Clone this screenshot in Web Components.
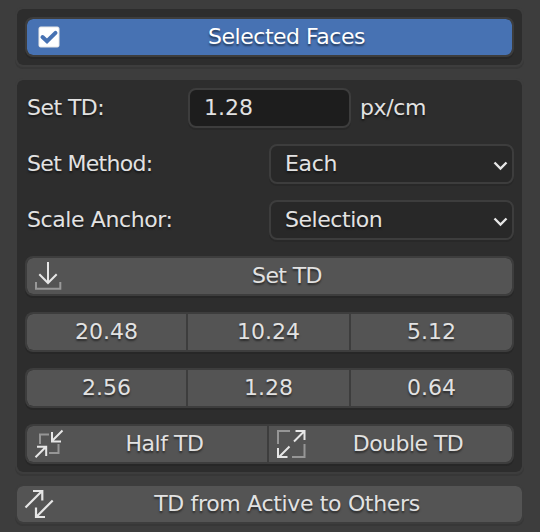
<!DOCTYPE html>
<html lang="en"><head><meta charset="utf-8"><title>Texel Density</title>
<style>
html,body{margin:0;height:100%;background:#3d3d3d;overflow:hidden}
body{font:22px/40px "DejaVu Sans",sans-serif;color:#e2e2e2;text-shadow:0 2px 2px rgba(0,0,0,.5)}
</style></head><body>
<td-sidebar>
 <td-panel class="top"><td-button class="on" icon="check" style="--pad:34px;--ls:-.48px">Selected Faces</td-button></td-panel>
 <td-panel class="main">
  <td-row style="--cols:153px 163px 1fr;--gap:10px"><td-label style="--ls:-.55px">Set TD:</td-label><td-field>1.28</td-field><td-label class="unit">px/cm</td-label></td-row>
  <td-row style="--cols:1fr 245px"><td-label style="--ls:-.68px">Set Method:</td-label><td-select>Each</td-select></td-row>
  <td-row style="--cols:1fr 245px"><td-label>Scale Anchor:</td-label><td-select style="--ls:-.45px">Selection</td-select></td-row>
  <td-button icon="down" style="--pad:35px;--ls:-.6px">Set TD</td-button>
  <td-row style="--cols:161px 163px 165px"><td-button class="first">20.48</td-button><td-button class="mid">10.24</td-button><td-button class="last">5.12</td-button></td-row>
  <td-row style="--cols:161px 163px 165px"><td-button class="first">2.56</td-button><td-button class="mid">1.28</td-button><td-button class="last">0.64</td-button></td-row>
  <td-row style="--cols:242px 247px"><td-button class="first" icon="in" style="--pad:35px;--ls:-.45px">Half TD</td-button><td-button class="last" icon="out" style="--pad:35px;--ls:-.55px">Double TD</td-button></td-row>
 </td-panel>
 <td-button class="wide" icon="swap" style="--pad:35px;--ls:-.33px">TD from Active to Others</td-button>
</td-sidebar>
<script>
const icons={
check:'<rect x="12" y="8" width="20" height="20" rx="1.5" fill="#fff"/><path d="M15.500 18 20 22.200 28.500 13.800" stroke="#4772b3" stroke-width="4" stroke-linecap="round"/>',
down:'<path d="M9 24v6.700h24.300V24" stroke="#999" stroke-width="2"/><path d="M21 4v21M12.300 16.300 21 25 29.700 16.300" stroke-width="2"/>',
in:'<path d="M13 18V8.500h9M31.500 18v9H22" stroke="#969696" stroke-width="2"/><path d="M35.500 4.500 25 15M25 6v9.500h9M8.500 31.300 19 20.800M10 20.800h9.200V30" stroke-width="2"/>',
out:'<path d="M9 18V5h12M23 31h12.500V18" stroke="#969696" stroke-width="2"/><path d="M25 15.500 35.500 5M26.500 5h9v9M20.500 20.500 10 31M9 22v9h9.500" stroke-width="2"/>',
swap:'<path d="M8.500 21.500 25 5M16 5h9.300v9.500M35.700 14.500 19.500 30.700M19 21.500V31h9" stroke-width="2.200"/>'
};
function define(name,css,html='<slot></slot>'){
 customElements.define(name,class extends HTMLElement{
  constructor(){super();this.attachShadow({mode:'open'}).innerHTML='<style>*{box-sizing:border-box}'+css+'</style>'+html;}
  connectedCallback(){const s=this.shadowRoot.querySelector('svg');if(s&&this.hasAttribute('icon'))s.innerHTML=icons[this.getAttribute('icon')];}
 });
}
define('td-sidebar',':host{display:flex;flex-direction:column;padding:7px 16px 0 15px;box-sizing:border-box}');
define('td-panel',':host{display:grid;box-sizing:border-box;gap:16px;background:#2d2d2d;background-clip:padding-box;border:2px solid #3d3d3d;border-radius:8px;padding:8px;box-shadow:0 2px #373737;height:60px}:host(.main){height:396px;margin-top:11px;grid-auto-rows:40px}');
define('td-row',':host{display:grid;grid-template-columns:var(--cols);column-gap:var(--gap,0)}');
define('td-label',':host{display:block;height:40px;line-height:40px;white-space:nowrap;padding-left:2px;letter-spacing:var(--ls,-.4px)}:host(.unit){padding-left:0;margin-left:-1px}');
define('td-field',':host{display:block;box-sizing:border-box;height:40px;line-height:36px;padding-left:14px;border:2px solid #3d3d3d;border-radius:8px;background:#1d1d1d;box-shadow:0 2px #282828;text-shadow:none}');
define('td-select',':host{display:flex;justify-content:space-between;box-sizing:border-box;height:40px;line-height:36px;padding-left:14px;letter-spacing:var(--ls,-.3px);border:2px solid #3d3d3d;border-radius:8px;background:#282828;box-shadow:0 2px #282828}svg{width:22px;height:36px;fill:none;stroke:#e6e6e6;stroke-width:2.4}','<slot></slot><svg viewBox="0 0 22 36"><path d="M4.500 16.500 10.500 22.500 16.500 16.500"/></svg>');
define('td-button',`:host{display:grid;box-sizing:border-box;height:40px;line-height:36px;border:2px solid #3d3d3d;border-radius:8px;background:#545454;background-clip:padding-box;box-shadow:0 2px #272727;white-space:nowrap;letter-spacing:var(--ls,0)}
:host(.on){background-color:#4772b3;color:#fff}
:host(.first){border-radius:8px 0 0 8px;border-right:0}:host(.mid){border-radius:0;border-right:0}:host(.last){border-radius:0 8px 8px 0}
:host(.wide){margin-top:10px;box-shadow:0 2px #373737}
svg,span{grid-area:1/1}svg{width:48px;height:36px;fill:none;stroke:#e6e6e6}span{text-align:center;padding-left:var(--pad,0)}`,'<svg viewBox="0 0 48 36"></svg><span><slot></slot></span>');
</script></body></html>
